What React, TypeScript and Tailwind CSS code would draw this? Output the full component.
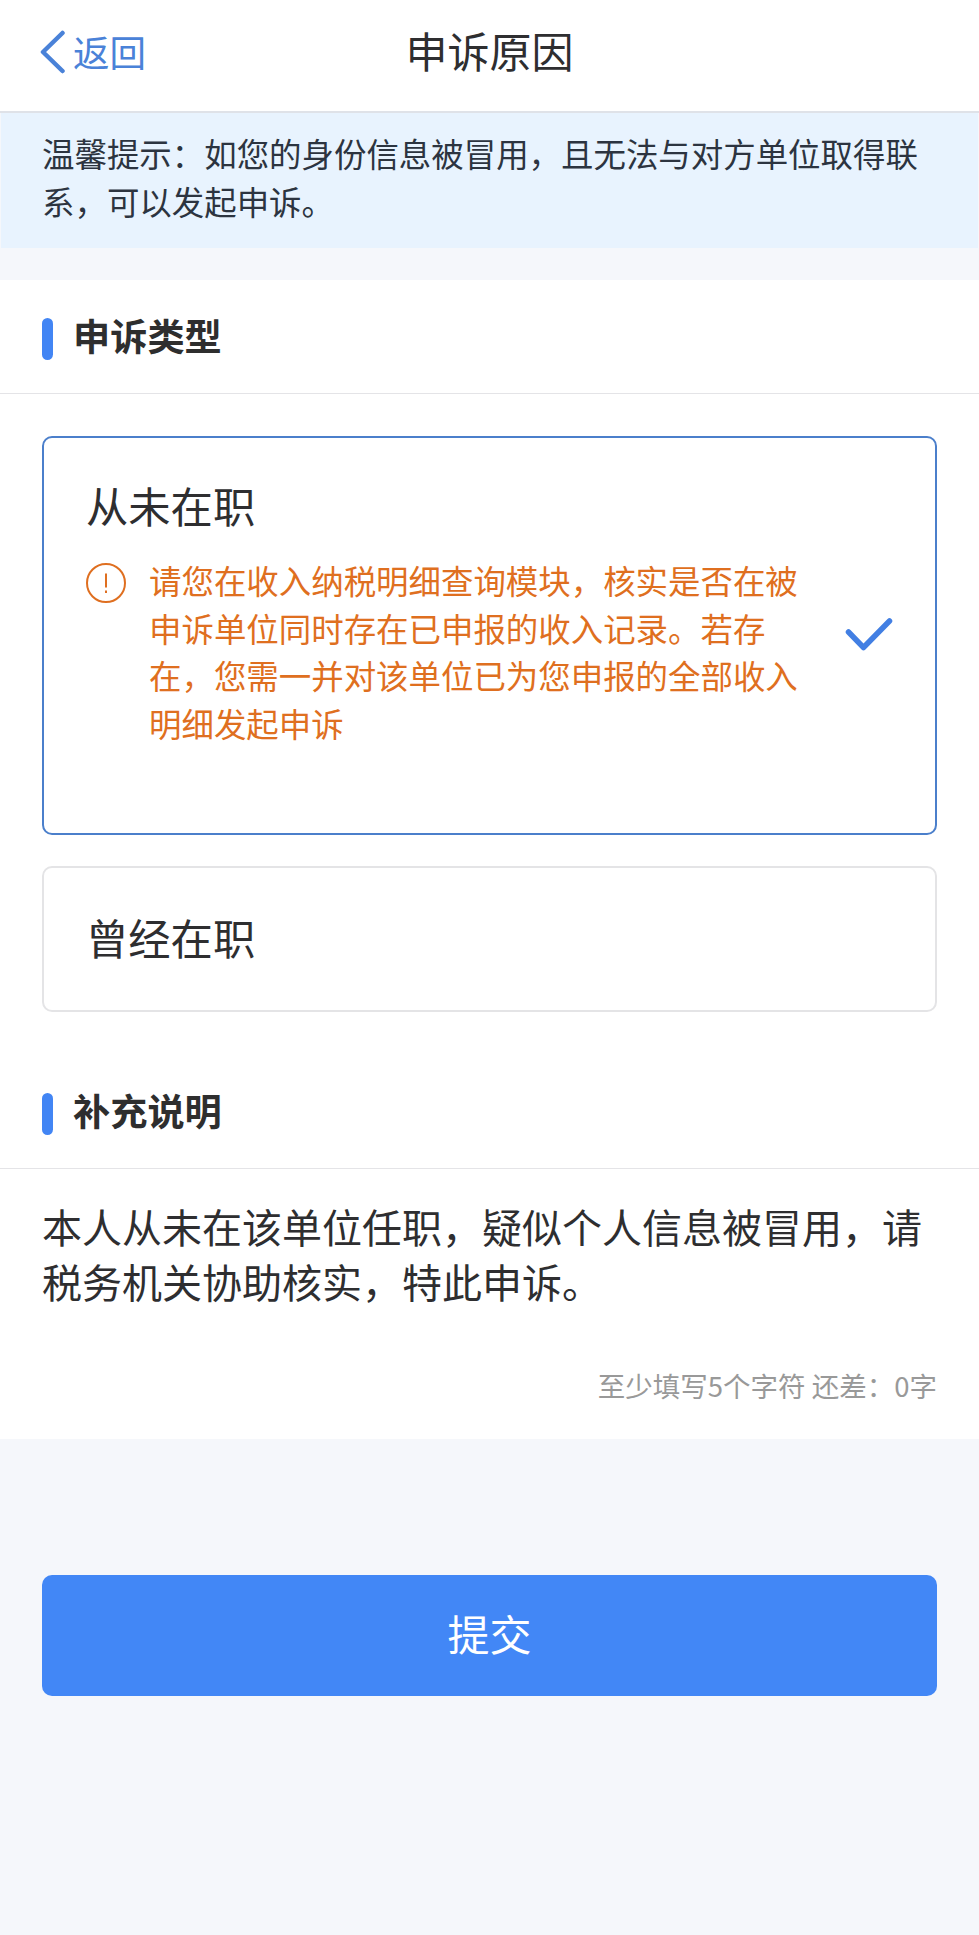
import React from "react";

interface ISectionHeadProps {
  title: string;
}

const SectionHead = ({ title }: ISectionHeadProps) => (
  <div className="flex items-center h-[114px] pl-[42px] border-b border-[#e4e4e7]">
    <span className="w-[11px] h-[42px] mt-[5px] rounded-full bg-[#4285f4]"></span>
    <h2 className="ml-[20px] mb-[3px] text-[37.2px] leading-[54px] font-bold text-[#2e2e2e]">
      {title}
    </h2>
  </div>
);

const App = () => {
  return (
    <div
      lang="zh-CN"
      className="flex flex-col w-[979px] h-[1935px] overflow-hidden bg-[#f5f7fb] font-['Noto_Sans_CJK_SC',sans-serif] text-[#2e2e30]"
    >
      <header className="grid grid-cols-3 items-center h-[113px] pb-[8px] bg-white border-b-2 border-[#dfe2e8]">
        <button type="button" className="flex items-center pl-[40px] text-[#4a82d8]">
          <svg width="26" height="44" viewBox="0 0 26 44" fill="none">
            <path
              d="M22.5 3L3 22L22.5 41"
              stroke="currentColor"
              strokeWidth="4.5"
              strokeLinecap="round"
              strokeLinejoin="round"
            />
          </svg>
          <span className="ml-[7px] text-[36.5px] leading-[50px]">返回</span>
        </button>
        <h1 className="mb-[3px] text-center text-[42px] leading-[60px]">申诉原因</h1>
      </header>

      <p className="h-[135px] mx-[1px] pl-[41px] pt-[16px] bg-[#e8f3fe] text-[32.45px] leading-[48px] text-[#2c3440]">
        温馨提示：如您的身份信息被冒用，且无法与对方单位取得联
        <br />
        系，可以发起申诉。
      </p>

      <main className="h-[1159px] mt-[32px] bg-white">
        <SectionHead title="申诉类型" />

        <div className="flex flex-col gap-[31px] px-[42px] pt-[42px]">
          <div className="flex items-center h-[399px] pl-[42px] pr-[40px] border-2 border-[#4b7fcb] rounded-[10px]">
            <div className="flex-grow h-full pt-[37px]">
              <h3 className="text-[42.3px] leading-[60px]">从未在职</h3>
              <div className="flex mt-[21px] text-[#df6f20]">
                <svg
                  className="flex-shrink-0 mt-[7px]"
                  width="40"
                  height="40"
                  viewBox="0 0 40 40"
                  fill="none"
                  stroke="currentColor"
                  strokeWidth="2"
                >
                  <circle cx="20" cy="20" r="19" />
                  <path d="M20 10.5V24.5M20 27.5V30" />
                </svg>
                <p className="ml-[23px] text-[32.45px] leading-[47.7px] whitespace-nowrap">
                  请您在收入纳税明细查询模块，核实是否在被
                  <br />
                  申诉单位同时存在已申报的收入记录。若存
                  <br />
                  在，您需一并对该单位已为您申报的全部收入
                  <br />
                  明细发起申诉
                </p>
              </div>
            </div>
            <svg
              className="mb-[4px]"
              width="52"
              height="38"
              viewBox="0 0 52 38"
              fill="none"
            >
              <path
                d="M5.5 17L20.5 32.5L46.5 6"
                stroke="#427fe3"
                strokeWidth="5.5"
                strokeLinecap="round"
                strokeLinejoin="round"
              />
            </svg>
          </div>

          <div className="flex items-center h-[146px] pl-[42px] pb-[5px] border-2 border-[#e4e4e6] rounded-[10px]">
            <h3 className="text-[42.3px] leading-[60px]">曾经在职</h3>
          </div>
        </div>

        <div className="mt-[43px]">
          <SectionHead title="补充说明" />
        </div>

        <p className="pl-[42px] pt-[30px] text-[40px] leading-[55.3px] whitespace-nowrap">
          本人从未在该单位任职，疑似个人信息被冒用，请
          <br />
          税务机关协助核实，特此申诉。
        </p>
        <div className="mt-[55px] pr-[42px] text-right text-[27.5px] leading-[40px] text-[#999]">
          至少填写5个字符 还差：0字
        </div>
      </main>

      <button
        type="button"
        className="flex-shrink-0 h-[121px] mx-[42px] mt-[136px] pb-[6px] rounded-[10px] bg-[#4287f6] text-[42px] leading-[60px] text-white"
      >
        提交
      </button>
    </div>
  );
};

export default App;
